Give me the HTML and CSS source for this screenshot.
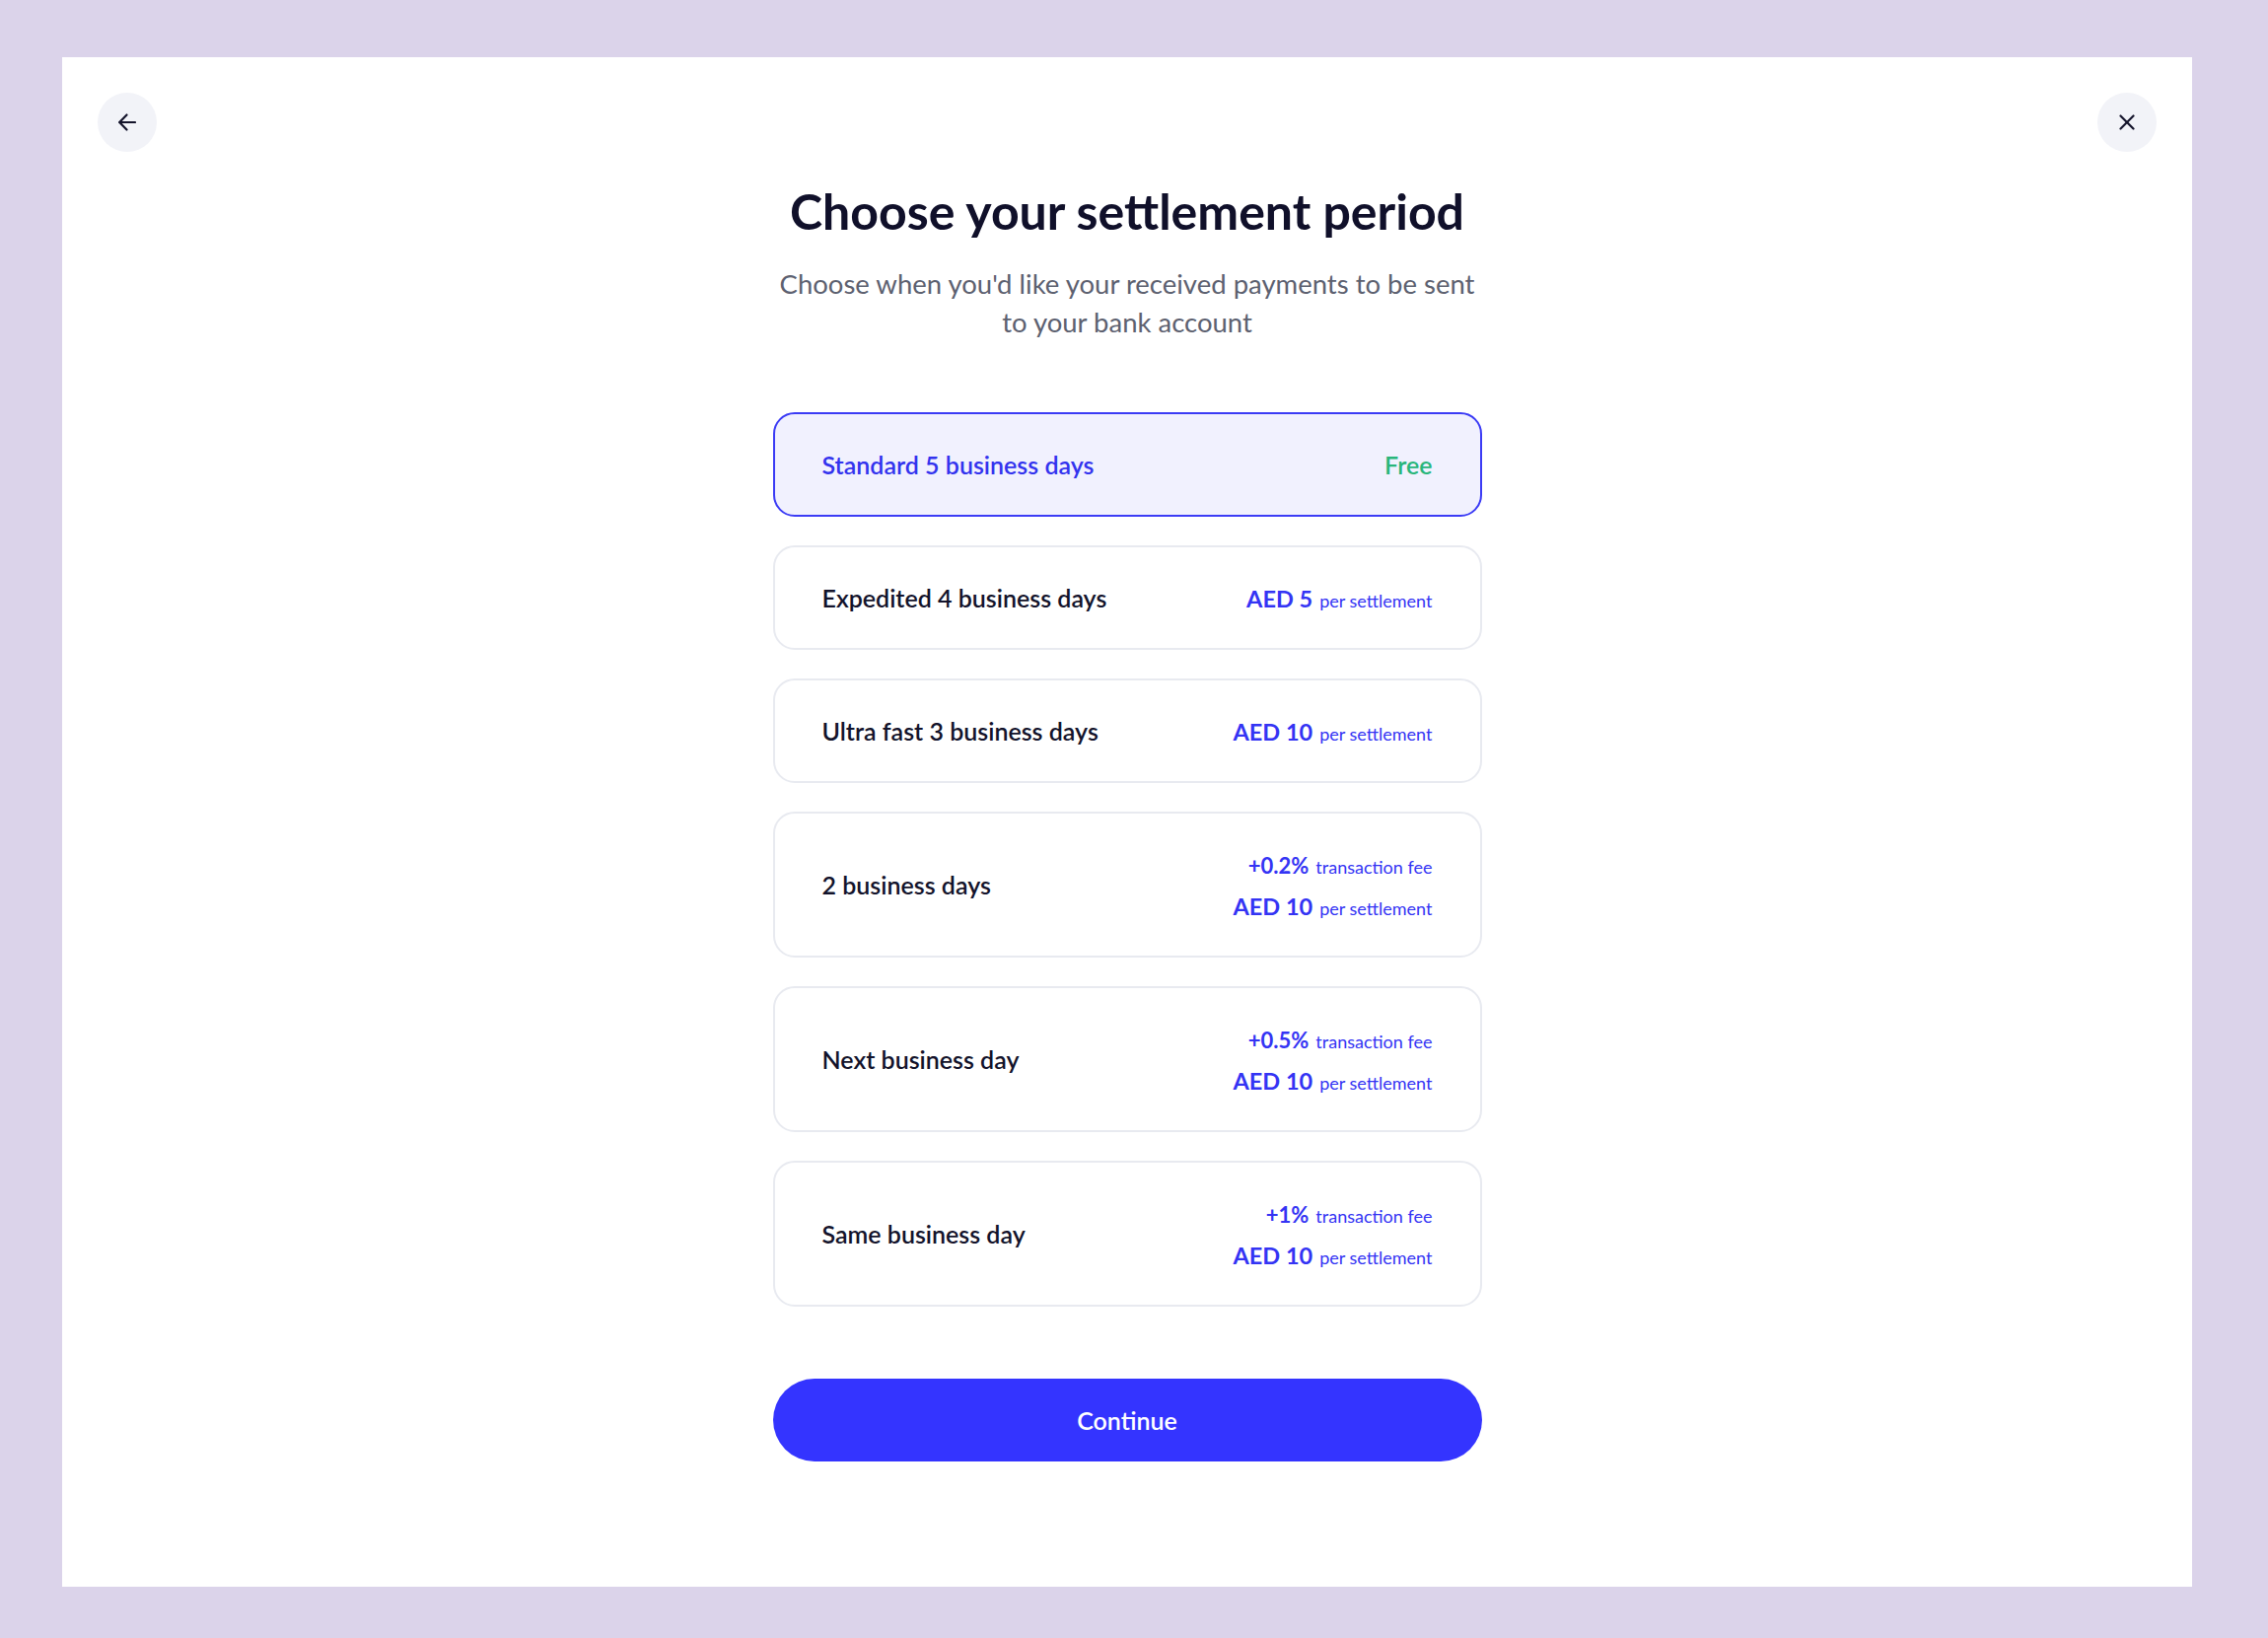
FILE: index.html
```html
<!DOCTYPE html>
<html lang="en">

<head>
    <meta charset="UTF-8">
    <meta name="viewport" content="width=device-width, initial-scale=1.0">
    <title>Choose your settlement period</title>
    <link rel="stylesheet" href="styles.css">
</head>

<body>

    <div class="panel">
        <div class="topbar">
            <button class="icon-btn" aria-label="Back">
                <svg width="18" height="18" viewBox="0 0 18 18" fill="none" stroke="#14142b" stroke-width="2.2" stroke-linecap="round" stroke-linejoin="round">
                    <path d="M17 9H1.5"></path>
                    <path d="M8.5 1.5L1.2 9l7.3 7.5"></path>
                </svg>
            </button>
            <button class="icon-btn" aria-label="Close">
                <svg width="16" height="16" viewBox="0 0 16 16" fill="none" stroke="#14142b" stroke-width="2.2" stroke-linecap="round">
                    <path d="M1.5 1.5l13 13"></path>
                    <path d="M14.5 1.5l-13 13"></path>
                </svg>
            </button>
        </div>

        <div class="content">
            <h1>Choose your settlement period</h1>
            <p class="subtitle">Choose when you'd like your received payments to be sent<br>to your bank account</p>

            <div class="options">
                <div class="option selected">
                    <span class="option-name">Standard 5 business days</span>
                    <span class="free">Free</span>
                </div>

                <div class="option">
                    <span class="option-name">Expedited 4 business days</span>
                    <div class="fees">
                        <div class="fee"><strong>AED 5</strong><span>per settlement</span></div>
                    </div>
                </div>

                <div class="option">
                    <span class="option-name">Ultra fast 3 business days</span>
                    <div class="fees">
                        <div class="fee"><strong>AED 10</strong><span>per settlement</span></div>
                    </div>
                </div>

                <div class="option">
                    <span class="option-name">2 business days</span>
                    <div class="fees">
                        <div class="fee small"><strong>+0.2%</strong><span>transaction fee</span></div>
                        <div class="fee"><strong>AED 10</strong><span>per settlement</span></div>
                    </div>
                </div>

                <div class="option">
                    <span class="option-name">Next business day</span>
                    <div class="fees">
                        <div class="fee small"><strong>+0.5%</strong><span>transaction fee</span></div>
                        <div class="fee"><strong>AED 10</strong><span>per settlement</span></div>
                    </div>
                </div>

                <div class="option">
                    <span class="option-name">Same business day</span>
                    <div class="fees">
                        <div class="fee small"><strong>+1%</strong><span>transaction fee</span></div>
                        <div class="fee"><strong>AED 10</strong><span>per settlement</span></div>
                    </div>
                </div>
            </div>

            <button class="continue-btn">Continue</button>
        </div>
    </div>

</body>

</html>
```

FILE: styles.css
```css
body {
    background-color: #dbd3ea;
    font-family: 'Lato', 'Open Sans', sans-serif;
    margin: 0;
    padding: 58px 77px 52px 63px;
}

.panel {
    background-color: white;
    height: 1551px;
    padding: 36px;
    box-sizing: border-box;
}

.topbar {
    display: flex;
    justify-content: space-between;
}

.icon-btn {
    width: 60px;
    height: 60px;
    border-radius: 50%;
    border: none;
    background-color: #f2f3f8;
    display: flex;
    align-items: center;
    justify-content: center;
    padding: 0;
    cursor: pointer;
}

.content {
    width: 719px;
    margin: 0 auto;
    text-align: center;
}

h1 {
    color: #10102a;
    font-size: 50px;
    font-weight: 700;
    line-height: 56px;
    margin: 32px 0 0;
}

.subtitle {
    color: #5d6170;
    font-size: 27.5px;
    line-height: 39px;
    margin: 26px 0 0;
}

.options {
    display: flex;
    flex-direction: column;
    gap: 29px;
    margin-top: 72px;
}

.option {
    display: flex;
    justify-content: space-between;
    align-items: center;
    padding: 30px 48px;
    border: 2px solid #e8eaf0;
    border-radius: 22px;
    text-align: left;
}

    .option.selected {
        background-color: #f1f1fe;
        border-color: #3b3bf5;
    }

.option-name {
    color: #13132b;
    font-size: 25px;
    font-weight: 600;
    line-height: 42px;
}

.selected .option-name {
    color: #3333ee;
}

.free {
    color: #29b67b;
    font-size: 25px;
    font-weight: 600;
    line-height: 42px;
}

.fees {
    text-align: right;
}

.fee {
    color: #3434f4;
    font-size: 25px;
    height: 42px;
    line-height: 42px;
}

    .fee strong {
        font-size: 23.5px;
        font-weight: 700;
        line-height: 1;
    }

    .fee span {
        font-size: 18px;
        margin-left: 7px;
        line-height: 1;
    }

    .fee.small strong {
        font-size: 22px;
    }

.continue-btn {
    width: 100%;
    height: 84px;
    margin-top: 73px;
    border: none;
    border-radius: 42px;
    background-color: #3434ff;
    color: white;
    font-family: inherit;
    font-size: 25px;
    font-weight: 600;
    cursor: pointer;
}
```
